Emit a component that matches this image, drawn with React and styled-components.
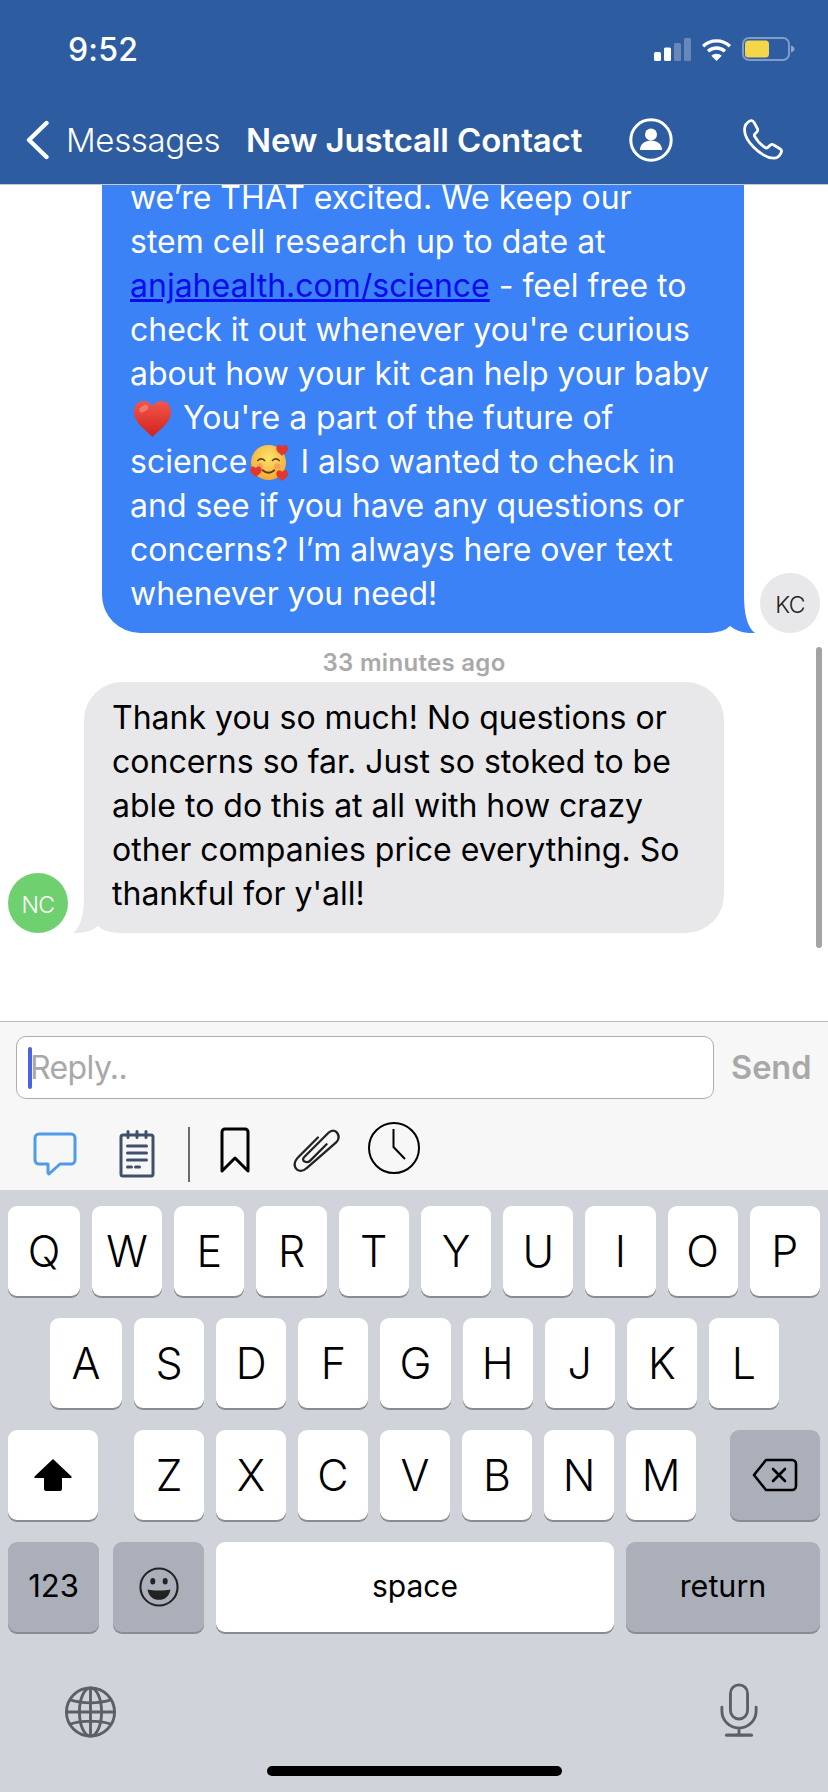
import React from "react";
import styled, { createGlobalStyle } from "styled-components";

const Global = createGlobalStyle`
  html, body { margin: 0; padding: 0; background: #fff; }
  #root { width: 828px; height: 1792px; }
  * { box-sizing: border-box; }
`;

const SANS = `Inter, "Liberation Sans", Arial, sans-serif`;

const Phone = styled.div`
  width: 828px; height: 1792px; display: flex; flex-direction: column;
  overflow: hidden; font-family: ${SANS}; position: relative; background: #fff;
`;

const Header = styled.header`
  height: 185px; flex: none; background: #2d5ca0; color: #fff;
  display: flex; flex-direction: column; border-bottom: 1px solid #c9c9c9;
`;
const StatusBar = styled.div`
  height: 100px; display: flex; align-items: flex-start; justify-content: space-between;
  padding: 32px 32px 0 68px;
`;
const Clock = styled.div`
  font-size: 32px; line-height: 36px; font-weight: 500; letter-spacing: 0.2px;
`;
const StatusIcons = styled.div`
  display: flex; align-items: center; gap: 10px; padding-top: 5px;
`;
const NavBar = styled.nav`
  flex: 1; display: flex; align-items: center; padding: 0 0 4px 25px;
`;
const BackLabel = styled.span`
  font-size: 33px; font-weight: 300; margin-left: 15px; letter-spacing: -0.35px; flex: 0 0 180px; white-space: nowrap;
`;
const Title = styled.h1`
  margin: 0; font-size: 33px; font-weight: 600; letter-spacing: -0.15px; flex: 0 0 383px; white-space: nowrap;
`;
const NavIcons = styled.div`
  display: flex; align-items: center; gap: 69px;
`;

const Thread = styled.main`
  flex: 1; min-height: 0; overflow: hidden; position: relative; isolation: isolate;
  display: flex; flex-direction: column; justify-content: flex-end; padding-bottom: 88px;
`;
const ScrollThumb = styled.div`
  position: absolute; right: 6px; bottom: 73px; width: 6px; height: 301px; border-radius: 3px; background: #a3a3a3;
`;
const Row = styled.div`
  display: flex; align-items: flex-end; flex: none;
  justify-content: ${p => (p.$out ? "flex-end" : "flex-start")};
  padding: ${p => (p.$out ? "0 8px 0 0" : "0 0 0 8px")};
`;
const Avatar = styled.div`
  width: 60px; height: 60px; border-radius: 50%; flex: none;
  display: flex; align-items: center; justify-content: center; padding-top: 3px;
  font-size: 23px; font-weight: 300; letter-spacing: -0.6px;
  background: ${p => p.$bg}; color: ${p => p.$fg};
`;
const Bubble = styled.div`
  position: relative; border-radius: 38px; flex: none;
  font-size: 32px; line-height: 44px; white-space: pre-line;
  width: ${p => p.$w}px;
  padding: ${p => p.$pad};
  background: ${p => p.$bg}; color: ${p => p.$fg};
  margin: ${p => p.$m};
  a { color: #0a0aee; text-decoration: underline; }
  svg.emoji { display: inline-block; vertical-align: -8px; }
  svg.heart { margin: 0 2px 0 3px; }
  svg.face { margin: 0 2px 0 3px; }
`;
const Tail = styled.svg`
  position: absolute; bottom: 0; width: 50px; height: 38px; z-index: -1;
  ${p => (p.$out ? "right: -11px;" : "left: -11px;")}
`;
const Stamp = styled.div`
  flex: none; text-align: center; color: #a9a9a9; font-size: 24px; font-weight: 600;
  line-height: 28px; letter-spacing: 0.3px; margin: 16px 0 5px;
`;

const Composer = styled.section`
  height: 169px; flex: none; background: #f7f7f8; border-top: 1px solid #bdbdbd;
  display: flex; flex-direction: column; padding: 14px 0 0 16px;
`;
const InputRow = styled.div`
  display: flex; align-items: center; gap: 17px;
`;
const Input = styled.div`
  width: 698px; height: 63px; background: #fff; border: 1px solid #adadad; border-radius: 10px;
  display: flex; align-items: center; padding-left: 11px;
  font-size: 32px; color: #a8a8a8; letter-spacing: -0.6px;
`;
const Caret = styled.span`
  width: 4px; height: 42px; border-radius: 2px; background: #4a63e2; flex: none; margin-right: -2px;
`;
const Send = styled.span`
  font-size: 32.5px; font-weight: 600; color: #a8a8a8;
`;
const Tools = styled.div`
  display: flex; align-items: flex-start; padding: 19px 0 0 17px;
`;
const Divider = styled.span`
  width: 2px; height: 55px; background: #6b6b6b; margin: 9px 30px 0 33px; flex: none;
`;
const Tool = styled.span`
  display: block; flex: none; line-height: 0;
  margin: ${p => p.$m || "0"};
`;

const Keyboard = styled.section`
  height: 602px; flex: none; background: #d1d3da; padding: 16px 8px 0; display: flex; flex-direction: column; gap: 22px; position: relative;
`;
const KeyRow = styled.div`
  display: flex; gap: 12px; height: 90px; flex: none;
  padding: ${p => p.$pad || "0"};
`;
const Key = styled.div`
  height: 90px; border-radius: 9px; flex: ${p => (p.$w ? `0 0 ${p.$w}px` : "1 1 0")};
  background: ${p => (p.$dark ? "#abafba" : "#fff")};
  box-shadow: 0 2px 0 #8b8c90;
  display: flex; align-items: center; justify-content: center;
  color: #000; font-size: ${p => p.$size || 43}px; font-weight: ${p => p.$weight || 300};
  margin: ${p => p.$m || 0}; padding-bottom: ${p => p.$lift || 0}px;
`;
const KeyboardFoot = styled.div`
  display: flex; justify-content: space-between; padding: 28px 62px 0 56px; align-items: flex-end;
`;
const HomeBar = styled.div`
  position: absolute; left: 267px; bottom: 16px; width: 295px; height: 10px; border-radius: 5px; background: #000;
`;

const Signal = () => (
  <svg width="37" height="23" viewBox="0 0 37 23">
    <rect x="0" y="14" width="7" height="9" rx="1.500" fill="#fff" />
    <rect x="10" y="9.500" width="7" height="13.500" rx="1.500" fill="#fff" />
    <rect x="20" y="5" width="7" height="18" rx="1.500" fill="#fff" opacity=".28" />
    <rect x="30" y="0" width="7" height="23" rx="1.500" fill="#fff" opacity=".28" />
  </svg>
);
const Wifi = () => (
  <svg width="31" height="23" viewBox="0 0 32 24" fill="none" stroke="#fff" strokeWidth="3.600">
    <path d="M2 8.500a20.500 20.500 0 0 1 28 0" />
    <path d="M7.200 13.800a13 13 0 0 1 17.600 0" />
    <path d="M16 24l-5.500-5.400a7.800 7.800 0 0 1 11 0z" fill="#fff" stroke="none" />
  </svg>
);
const Battery = () => (
  <svg width="54" height="24" viewBox="0 0 54 24">
    <rect x="1" y="1" width="46" height="22" rx="6" fill="none" stroke="#fff" strokeOpacity=".4" strokeWidth="2" />
    <rect x="3" y="3.500" width="24" height="17" rx="3.500" fill="#f6d649" />
    <path d="M49 8.500c2.400.8 3.500 2 3.500 3.500s-1.100 2.700-3.500 3.500z" fill="#fff" fillOpacity=".45" />
  </svg>
);
const Chevron = () => (
  <svg width="26" height="40" viewBox="0 0 26 40" fill="none" stroke="#fff" strokeWidth="4.400" strokeLinecap="round" strokeLinejoin="round">
    <path d="M21.500 3L4 20l17.500 17" />
  </svg>
);
const Contact = () => (
  <svg width="44" height="44" viewBox="0 0 44 44">
    <circle cx="22" cy="22" r="20.200" fill="none" stroke="#fff" strokeWidth="3" />
    <circle cx="22" cy="16.500" r="6" fill="#fff" />
    <path d="M11 32c0-6 5-9.500 11-9.500S33 26 33 32z" fill="#fff" />
  </svg>
);
const Call = () => (
  <svg width="42" height="42" viewBox="0 0 42 42" fill="none" stroke="#fff" strokeWidth="2.800" strokeLinejoin="round">
    <path d="M3 7.500C4 4 7.500 1.500 9.500 1.700c1.200.1 2 .8 2.700 2l3.200 6c.5 1 .4 2-.3 2.900l-2.400 2.600c-.5.600-.5 1.400 0 2.200 2.600 4.700 6.200 8.600 10.700 11.300.8.500 1.600.4 2.200-.1l2.800-2.600c.9-.7 2-.8 2.900-.2l6.600 4c1.200.7 1.800 1.600 1.600 2.800-.4 2.700-3.600 6.600-7.600 6.600C20 38.700 -.5 21 3 7.500z" />
  </svg>
);
const Heart = () => (
  <svg className="emoji heart" width="39" height="37" viewBox="0 0 40 38">
    <defs>
      <linearGradient id="hg" x1="0" y1="0" x2="0" y2="1">
        <stop offset="0" stopColor="#f2574a" />
        <stop offset="1" stopColor="#d2211c" />
      </linearGradient>
    </defs>
    <path d="M20 38C14 31 1 24 1 12 1 5 6 1 11 1c4 0 7 2 9 6 2-4 5-6 9-6 5 0 10 4 10 11 0 12-13 19-19 26z" fill="url(#hg)" />
    <ellipse cx="11" cy="9" rx="5" ry="3" fill="#fff" opacity=".25" transform="rotate(-30 11 9)" />
  </svg>
);
const MiniHeart = ({ x, y }) => (
  <path transform={`translate(${x} ${y})`} d="M6 11C4 9 0 7 0 3.500 0 1.300 1.600 0 3 0c1.300 0 2.300.7 3 2 .7-1.300 1.700-2 3-2 1.400 0 3 1.300 3 3.500C12 7 8 9 6 11z" fill="#e3362f" />
);
const HeartsFace = () => (
  <svg className="emoji face" width="39" height="37" viewBox="0 0 40 38">
    <defs>
      <radialGradient id="fg" cx=".5" cy=".35" r=".7">
        <stop offset="0" stopColor="#fde26b" />
        <stop offset="1" stopColor="#f3a62e" />
      </radialGradient>
    </defs>
    <circle cx="19" cy="19" r="18" fill="url(#fg)" />
    <path d="M8 17q3.500-3.500 7 0M23 17q3.500-3.500 7 0" fill="none" stroke="#5a3a17" strokeWidth="1.600" strokeLinecap="round" />
    <path d="M13 27q6 5 12 0" fill="none" stroke="#5a3a17" strokeWidth="1.800" strokeLinecap="round" />
    <circle cx="10" cy="23" r="3.200" fill="#f58a5d" opacity=".6" />
    <circle cx="28" cy="23" r="3.200" fill="#f58a5d" opacity=".6" />
    <MiniHeart x="27" y="1" />
    <MiniHeart x="0" y="23" />
    <MiniHeart x="27" y="27" />
  </svg>
);

const ChatTool = () => (
  <svg width="44" height="44" viewBox="0 0 44 44" fill="none" stroke="#4f9be6" strokeWidth="3" strokeLinejoin="round">
    <path d="M6 2h32a4 4 0 0 1 4 4v22a4 4 0 0 1-4 4H27L16 42l-1-1 0-9H6a4 4 0 0 1-4-4V6a4 4 0 0 1 4-4z" />
  </svg>
);
const NoteTool = () => (
  <svg width="36" height="48" viewBox="0 0 36 48" fill="none" stroke="#3f5068" strokeWidth="3" strokeLinecap="round">
    <rect x="2" y="5" width="32" height="41" rx="2" />
    <path d="M9 1.500v6M18 1.500v6M27 1.500v6" />
    <path d="M8.500 16h19M8.500 23h19M8.500 30h19M8.500 37h4M16.500 37h4" />
  </svg>
);
const BookmarkTool = () => (
  <svg width="30" height="46" viewBox="0 0 30 46" fill="none" stroke="#000" strokeWidth="3" strokeLinejoin="round">
    <path d="M5 2h20a3 3 0 0 1 3 3v39L15 31 2 44V5a3 3 0 0 1 3-3z" />
  </svg>
);
const ClipTool = () => (
  <svg width="48" height="46" viewBox="0 0 50 46" fill="none" stroke="#222" strokeWidth="2.400" strokeLinecap="round" strokeLinejoin="round">
    <path d="M27 9L7 29c-5 5-5 9-3 12s7 4 11 0L46 14c3-3 3-7 1-10s-6-3-9 0L13 29c-2 2-2 4 0 5s4 1 6-1l17-17" />
  </svg>
);
const ClockTool = () => (
  <svg width="52" height="52" viewBox="0 0 52 52" fill="none" stroke="#000" strokeWidth="2">
    <circle cx="26" cy="26" r="25" />
    <path d="M25.500 7v18L37 37" />
  </svg>
);
const Shift = () => (
  <svg width="38" height="32" viewBox="0 0 38 32">
    <path d="M19 0L37.500 17.500c.5.600.2 1.500-.7 1.500H28v11a2 2 0 0 1-2 2H12a2 2 0 0 1-2-2V19H1.200c-.9 0-1.200-.9-.7-1.500z" fill="#000" />
  </svg>
);
const Backspace = () => (
  <svg width="46" height="34" viewBox="0 0 46 34" fill="none" stroke="#000" strokeWidth="2.600" strokeLinejoin="round" strokeLinecap="round">
    <path d="M14 2h26a4 4 0 0 1 4 4v22a4 4 0 0 1-4 4H14L2 17z" />
    <path d="M21 11l12 12M33 11L21 23" />
  </svg>
);
const Smile = () => (
  <svg width="40" height="40" viewBox="0 0 42 42">
    <circle cx="21" cy="21" r="19.500" fill="none" stroke="#222" strokeWidth="2.200" />
    <ellipse cx="14.500" cy="15" rx="2.600" ry="3.400" fill="#222" />
    <ellipse cx="27.500" cy="15" rx="2.600" ry="3.400" fill="#222" />
    <path d="M9 23.500c7 1.600 17 1.600 24 0-1 7-6 11-12 11S10 30.500 9 23.500z" fill="#222" />
  </svg>
);
const Globe = () => (
  <svg width="53" height="52" viewBox="0 0 54 54" fill="none" stroke="#5c5f66" strokeWidth="3">
    <circle cx="27" cy="27" r="25" />
    <ellipse cx="27" cy="27" rx="11.500" ry="25" />
    <path d="M27 2v50M2 27h50M6 14.500c12 4 30 4 42 0M6 39.500c12-4 30-4 42 0" />
  </svg>
);
const Mic = () => (
  <svg width="38" height="56" viewBox="0 0 40 56" fill="none" stroke="#5c5f66" strokeWidth="3" strokeLinecap="round">
    <rect x="11" y="1.500" width="18" height="36" rx="9" />
    <path d="M2 25v4a18 18 0 0 0 36 0v-4M20 47v7" />
    <path d="M7 54.500h26" strokeWidth="3.500" />
  </svg>
);

const TOP = "WERTYUIOP".split("");
const MID = "SDFGHJKL".split("");
const LOW = "XCVBNM".split("");

export default function App() {
  return (
    <Phone>
      <Global />
      <Header>
        <StatusBar>
          <Clock>9:52</Clock>
          <StatusIcons>
            <Signal />
            <Wifi />
            <Battery />
          </StatusIcons>
        </StatusBar>
        <NavBar>
          <Chevron />
          <BackLabel>Messages</BackLabel>
          <Title>New Justcall Contact</Title>
          <NavIcons>
            <Contact />
            <Call />
          </NavIcons>
        </NavBar>
      </Header>

      <Thread>
        <Row $out>
          <Bubble $w={642} $bg="#3b82f6" $fg="#fff" $pad="60px 28px 17px" $m="0 16px 0 0">
            we’re THAT excited. We keep our{"\n"}stem cell research up to date at{"\n"}
            <a href="#science">anjahealth.com/science</a> - feel free to{"\n"}check it out whenever you're curious{"\n"}about how your kit can help your baby{"\n"}
            <Heart /> You're a part of the future of{"\n"}science<HeartsFace /> I also wanted to check in{"\n"}and see if you have any questions or{"\n"}concerns? I’m always here over text{"\n"}whenever you need!
            <Tail $out viewBox="0 0 50 38">
              <path d="M39 0Q39 30 50 38Q35 39 25 31Q19 38 1 38L1 0Z" fill="#3b82f6" />
            </Tail>
          </Bubble>
          <Avatar $bg="#e8e8ea" $fg="#222">KC</Avatar>
        </Row>
        <Stamp>33 minutes ago</Stamp>
        <Row>
          <Avatar $bg="#6fd06f" $fg="#fff">NC</Avatar>
          <Bubble $w={640} $bg="#e8e8ea" $fg="#000" $pad="14px 28px 17px" $m="0 0 0 16px">
            Thank you so much! No questions or{"\n"}concerns so far. Just so stoked to be{"\n"}able to do this at all with how crazy{"\n"}other companies price everything. So{"\n"}thankful for y'all!
            <Tail viewBox="0 0 50 38">
              <path d="M11 0Q11 30 0 38Q15 39 25 31Q31 38 49 38L49 0Z" fill="#e8e8ea" />
            </Tail>
          </Bubble>
        </Row>
        <ScrollThumb />
      </Thread>

      <Composer>
        <InputRow>
          <Input>
            <Caret />
            Reply..
          </Input>
          <Send>Send</Send>
        </InputRow>
        <Tools>
          <Tool $m="14px 0 0 0"><ChatTool /></Tool>
          <Tool $m="12px 0 0 42px"><NoteTool /></Tool>
          <Divider />
          <Tool $m="9px 0 0 0"><BookmarkTool /></Tool>
          <Tool $m="10px 0 0 42px"><ClipTool /></Tool>
          <Tool $m="4px 0 0 28px"><ClockTool /></Tool>
        </Tools>
      </Composer>

      <Keyboard>
        <KeyRow>
          <Key $w={72}>Q</Key>
          {TOP.map(k => <Key key={k}>{k}</Key>)}
        </KeyRow>
        <KeyRow $pad="0 41px 0 42px">
          <Key $w={72}>A</Key>
          {MID.map(k => <Key key={k}>{k}</Key>)}
        </KeyRow>
        <KeyRow>
          <Key $w={90}><Shift /></Key>
          <Key $w={70} $m="0 0 0 24px">Z</Key>
          {LOW.map(k => <Key key={k} $w={70}>{k}</Key>)}
          <Key $w={90} $dark $m="0 0 0 22px"><Backspace /></Key>
        </KeyRow>
        <KeyRow>
          <Key $w={91} $dark $size={31} $weight={400} $lift={3}>123</Key>
          <Key $w={91} $dark $m="0 0 0 2px"><Smile /></Key>
          <Key $w={398} $size={30} $weight={400} $lift={3}>space</Key>
          <Key $w={194} $dark $size={30.5} $weight={400} $lift={3}>return</Key>
        </KeyRow>
        <KeyboardFoot>
          <Globe />
          <Mic />
        </KeyboardFoot>
        <HomeBar />
      </Keyboard>
    </Phone>
  );
}
